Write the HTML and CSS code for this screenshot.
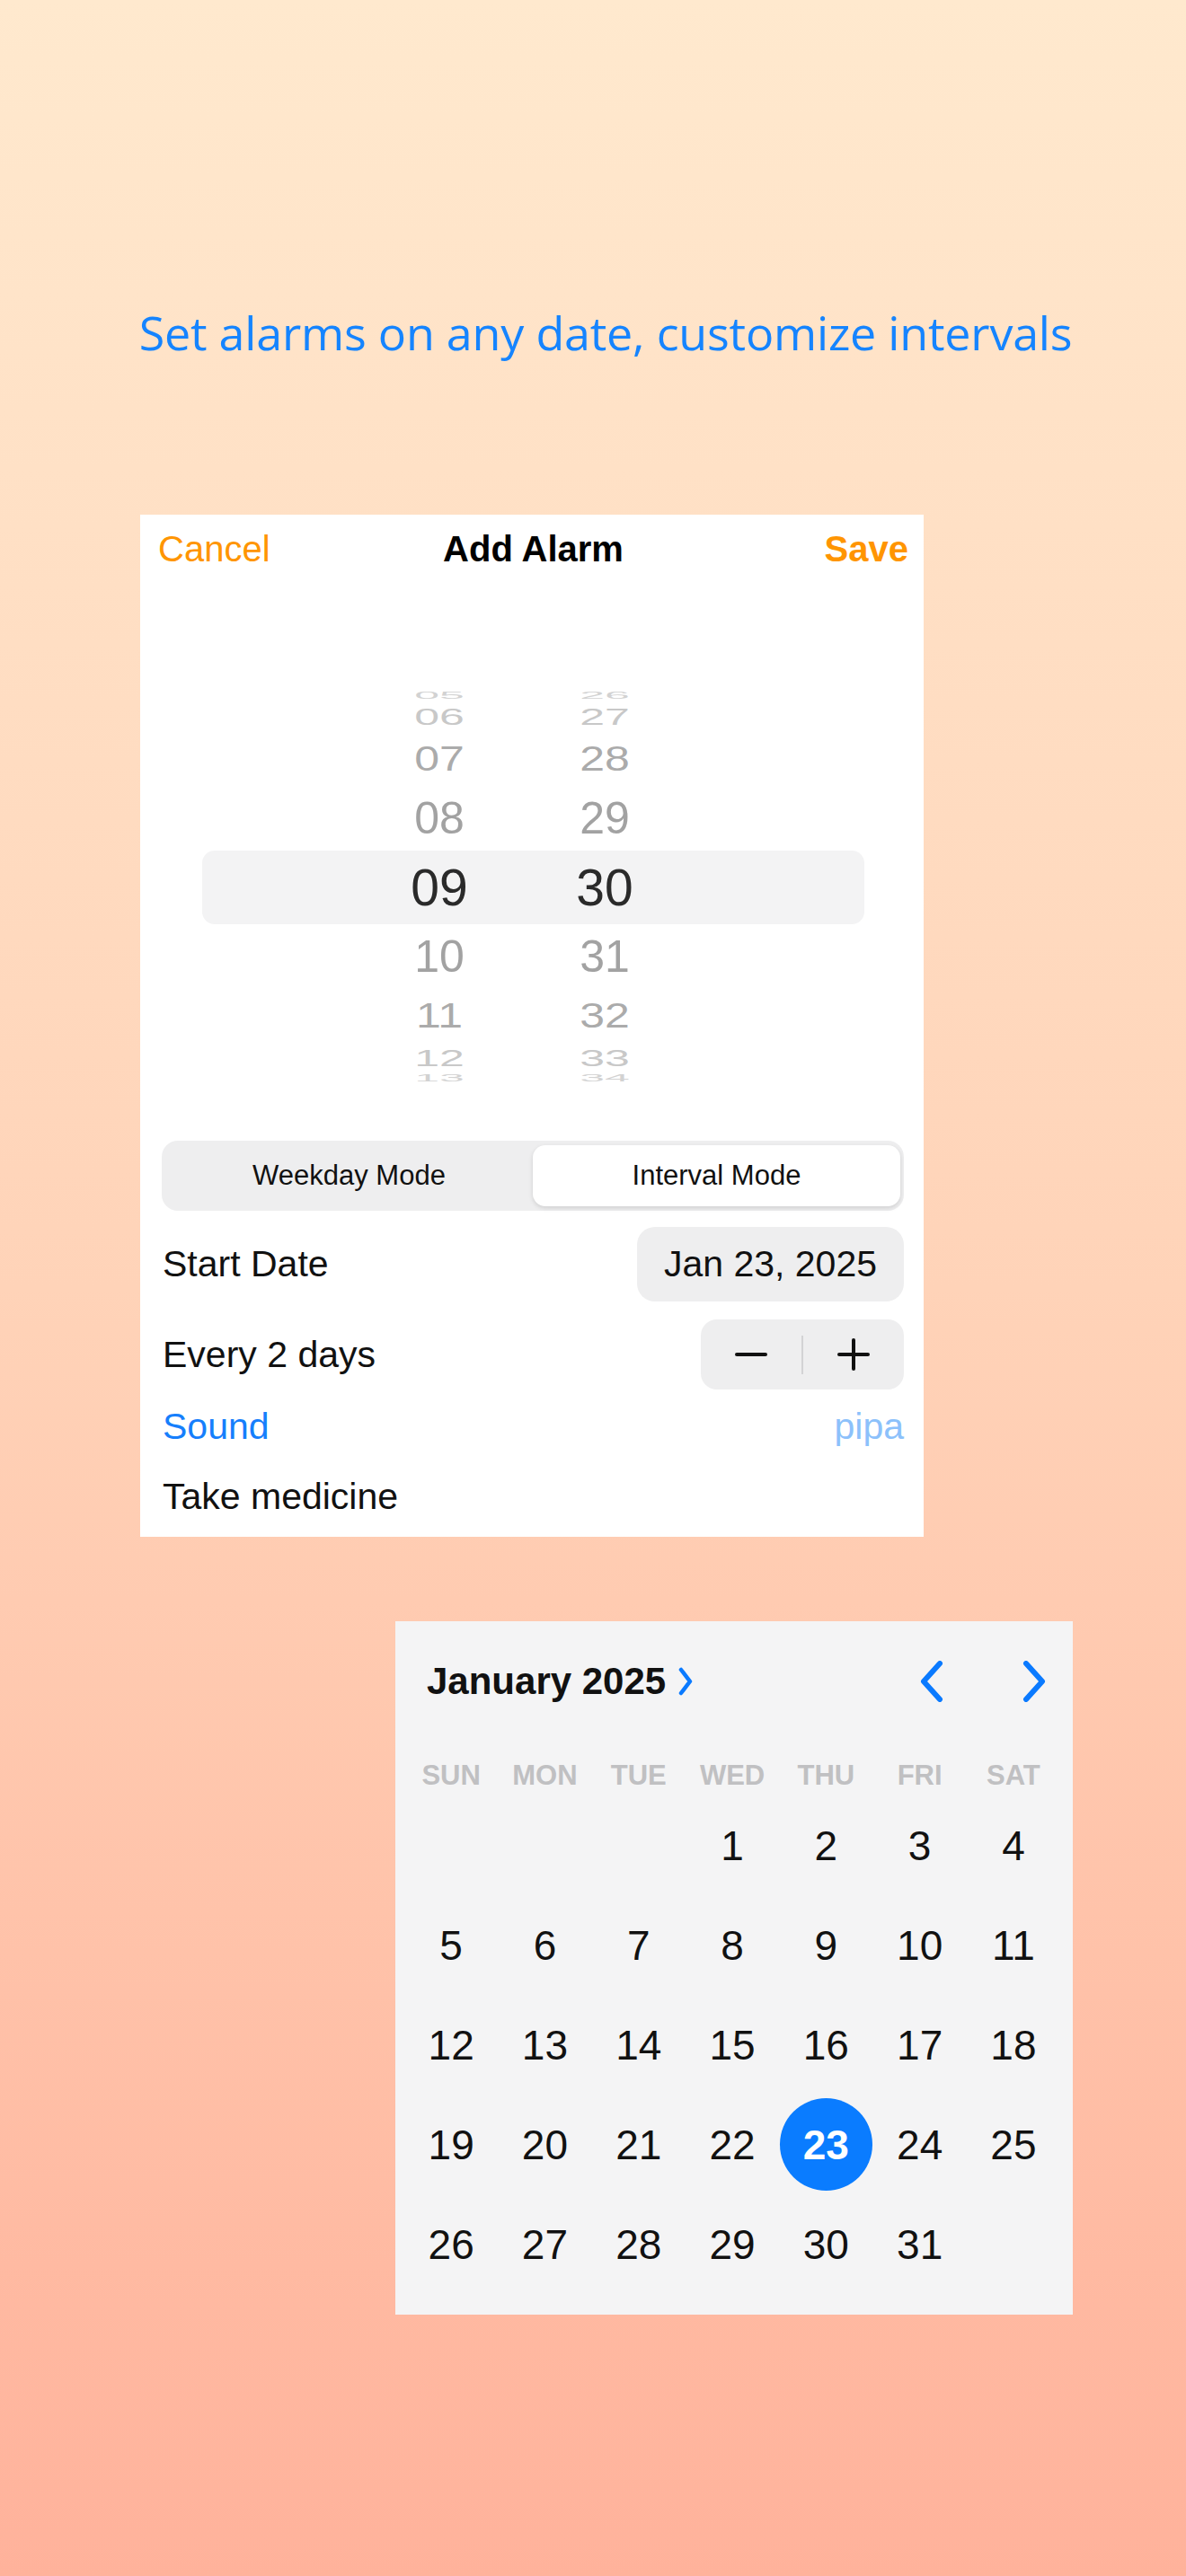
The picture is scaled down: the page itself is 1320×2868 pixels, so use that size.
FILE: index.html
```html
<!DOCTYPE html>
<html lang="en">
<head>
    <meta charset="UTF-8">
    <title>Add Alarm</title>
    <link rel="stylesheet" href="styles.css">
</head>
<body>
    <div class="page">
        <h1 class="headline">Set alarms on any date, customize intervals</h1>

        <div class="alarm-card">
            <div class="nav-bar">
                <span class="nav-link">Cancel</span>
                <span class="nav-title">Add Alarm</span>
                <span class="nav-link nav-save">Save</span>
            </div>

            <div class="picker">
                <div class="wheel-row d4"><span>05</span><span>26</span></div>
                <div class="wheel-row d3"><span>06</span><span>27</span></div>
                <div class="wheel-row d2"><span>07</span><span>28</span></div>
                <div class="wheel-row d1"><span>08</span><span>29</span></div>
                <div class="wheel-row d0"><span>09</span><span>30</span></div>
                <div class="wheel-row d1"><span>10</span><span>31</span></div>
                <div class="wheel-row d2"><span>11</span><span>32</span></div>
                <div class="wheel-row d3"><span>12</span><span>33</span></div>
                <div class="wheel-row d4"><span>13</span><span>34</span></div>
            </div>

            <div class="segmented">
                <div class="segment">Weekday Mode</div>
                <div class="segment active">Interval Mode</div>
            </div>

            <div class="form-row row-date">
                <span>Start Date</span>
                <span class="date-pill">Jan 23, 2025</span>
            </div>

            <div class="form-row row-step">
                <span>Every 2 days</span>
                <div class="stepper">
                    <div class="step-btn">
                        <svg width="36" height="36" viewBox="0 0 36 36"><line x1="2" y1="18" x2="34" y2="18" stroke="#111" stroke-width="4" stroke-linecap="round"/></svg>
                    </div>
                    <div class="step-divider"></div>
                    <div class="step-btn">
                        <svg width="36" height="36" viewBox="0 0 36 36"><line x1="2" y1="18" x2="34" y2="18" stroke="#111" stroke-width="4" stroke-linecap="round"/><line x1="18" y1="2" x2="18" y2="34" stroke="#111" stroke-width="4" stroke-linecap="round"/></svg>
                    </div>
                </div>
            </div>

            <div class="form-row row-sound">
                <span class="sound-label">Sound</span>
                <span class="sound-value">pipa</span>
            </div>

            <div class="form-row row-note">
                <span>Take medicine</span>
            </div>
        </div>

        <div class="calendar">
            <div class="cal-header">
                <div class="cal-month">
                    <span>January 2025</span>
                    <svg width="20" height="32" viewBox="0 0 20 32"><polyline points="5,3 15,16 5,29" fill="none" stroke="#0a7aff" stroke-width="4.5" stroke-linecap="round" stroke-linejoin="round"/></svg>
                </div>
                <div class="cal-nav">
                    <svg width="46" height="46" viewBox="0 0 46 46"><polyline points="32,3 14,23 32,43" fill="none" stroke="#0a7aff" stroke-width="6" stroke-linecap="round" stroke-linejoin="round"/></svg>
                    <svg width="46" height="46" viewBox="0 0 46 46"><polyline points="14,3 32,23 14,43" fill="none" stroke="#0a7aff" stroke-width="6" stroke-linecap="round" stroke-linejoin="round"/></svg>
                </div>
            </div>

            <div class="cal-weekdays">
                <span>SUN</span><span>MON</span><span>TUE</span><span>WED</span><span>THU</span><span>FRI</span><span>SAT</span>
            </div>

            <div class="cal-days">
                <span></span><span></span><span></span>
                <span>1</span><span>2</span><span>3</span><span>4</span>
                <span>5</span><span>6</span><span>7</span><span>8</span><span>9</span><span>10</span><span>11</span>
                <span>12</span><span>13</span><span>14</span><span>15</span><span>16</span><span>17</span><span>18</span>
                <span>19</span><span>20</span><span>21</span><span>22</span><span class="selected"><b>23</b></span><span>24</span><span>25</span>
                <span>26</span><span>27</span><span>28</span><span>29</span><span>30</span><span>31</span><span></span>
            </div>
        </div>
    </div>
</body>
</html>
```

FILE: styles.css
```css
/* Page */
body {
    margin: 0;
    font-family: 'Liberation Sans', Arial, sans-serif;
    color: #111;
    background: linear-gradient(180deg, #ffe9ce 0%, #ffd3b8 50%, #ffb29b 100%);
    min-height: 2868px;
}

.page {
    padding-top: 339px;
    padding-bottom: 280px;
}

.headline {
    margin: 0;
    padding-left: 28px;
    font-family: 'Open Sans', sans-serif;
    font-weight: 400;
    font-size: 52px;
    line-height: 62px;
    color: #1584ff;
    text-align: center;
    letter-spacing: -0.2px;
}

/* Add alarm card */
.alarm-card {
    width: 872px;
    margin: 172px 0 0 156px;
    padding-bottom: 13px;
    background: #fff;
}

.nav-bar {
    height: 76px;
    padding: 0 17px 0 20px;
    display: flex;
    align-items: center;
    justify-content: space-between;
    font-size: 40px;
}

.nav-link {
    color: #ff9500;
    width: 130px;
}

.nav-save {
    font-weight: bold;
    text-align: right;
}

.nav-title {
    font-weight: bold;
    color: #000;
}

/* Time wheel */
.picker {
    width: 737px;
    margin: 120px 0 0 69px;
}

.wheel-row {
    display: grid;
    grid-template-columns: 184px 184px;
    padding-left: 172px;
    align-items: center;
    justify-items: center;
    overflow: hidden;
    font-size: 50px;
}

.wheel-row span {
    display: inline-block;
}

.d0 {
    height: 82px;
    line-height: 82px;
    background: #f3f3f4;
    border-radius: 14px;
    font-size: 57px;
    color: #2a2a2a;
}

.d1 {
    height: 72px;
    line-height: 72px;
    color: #a2a2a2;
}

.d2 {
    height: 60px;
    line-height: 60px;
    color: #ababab;
}

.d2 span {
    transform: scaleY(0.78);
}

.d3 {
    height: 34px;
    line-height: 34px;
    color: #c8c8c8;
}

.d3 span {
    transform: scaleY(0.5);
}

.d4 {
    height: 12px;
    line-height: 12px;
    color: #d2d2d2;
}

.d4 span {
    transform: scaleY(0.2);
}

/* Mode switch */
.segmented {
    display: flex;
    height: 78px;
    margin: 63px 22px 0 24px;
    padding: 5px 4px;
    box-sizing: border-box;
    background: #eeeeef;
    border-radius: 18px;
}

.segment {
    flex: 1;
    display: flex;
    align-items: center;
    justify-content: center;
    font-size: 31px;
    color: #111;
}

.segment.active {
    background: #fff;
    border-radius: 14px;
    box-shadow: 0 2px 5px rgba(0, 0, 0, 0.13);
}

/* Form rows */
.form-row {
    display: flex;
    align-items: center;
    justify-content: space-between;
    padding: 0 22px 0 25px;
    font-size: 41px;
}

.row-date {
    margin-top: 18px;
}

.date-pill {
    height: 83px;
    padding: 0 30px;
    display: flex;
    align-items: center;
    background: #eeeeef;
    border-radius: 20px;
}

.row-step {
    margin-top: 20px;
}

.stepper {
    width: 226px;
    height: 78px;
    display: flex;
    align-items: center;
    background: #eeeeef;
    border-radius: 18px;
}

.step-btn {
    flex: 1;
    display: flex;
    align-items: center;
    justify-content: center;
}

.step-divider {
    width: 2px;
    height: 43px;
    background: #d3d3d5;
}

.row-sound {
    height: 64px;
    margin-top: 9px;
}

.sound-label {
    color: #167ffc;
}

.sound-value {
    color: #8cc1fb;
}

.row-note {
    height: 64px;
    margin-top: 14px;
}

/* Calendar */
.calendar {
    width: 754px;
    margin: 94px 0 0 440px;
    padding: 27px 0 23px;
    background: #f4f4f5;
}

.cal-header {
    height: 80px;
    display: flex;
    align-items: center;
    justify-content: space-between;
    padding: 0 20px 0 35px;
}

.cal-month {
    display: flex;
    align-items: center;
    gap: 12px;
    font-size: 42px;
    font-weight: bold;
}

.cal-nav {
    display: flex;
    gap: 68px;
}

.cal-weekdays,
.cal-days {
    display: grid;
    grid-template-columns: repeat(7, 104.3px);
    margin-left: 10px;
    justify-items: center;
    align-items: center;
}

.cal-weekdays {
    height: 44px;
    margin-top: 43px;
    font-size: 31px;
    font-weight: bold;
    color: #c0c0c2;
}

.cal-days {
    grid-auto-rows: 111px;
    font-size: 46px;
}

.cal-days .selected {
    width: 103px;
    height: 103px;
    display: flex;
    align-items: center;
    justify-content: center;
    border-radius: 50%;
    background: #0a7cff;
    color: #fff;
}
```
